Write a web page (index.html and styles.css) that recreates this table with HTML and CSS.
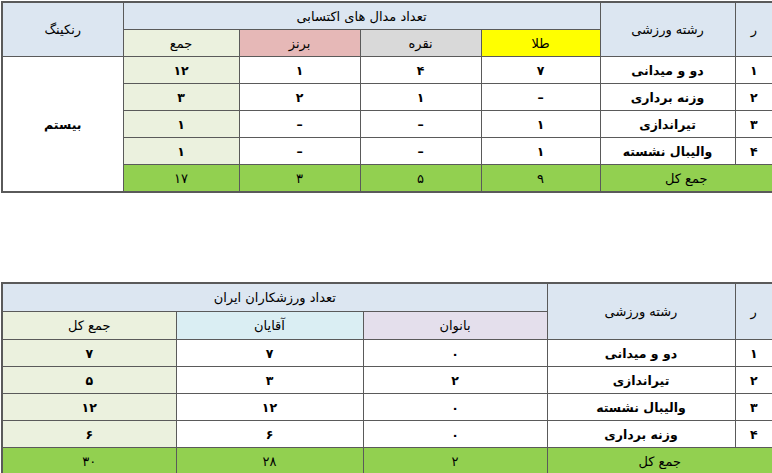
FILE: index.html
```html
<!DOCTYPE html>
<html lang="fa">
<head>
<meta charset="utf-8">
<link rel="stylesheet" href="styles.css">
</head>
<body>
<div class="page">
  <table class="grid medals" dir="rtl">
    <colgroup>
      <col class="w-r"><col class="w-sport1"><col class="w-gold"><col class="w-silver"><col class="w-bronze"><col class="w-sum"><col class="w-rank">
    </colgroup>
    <tr class="hrow">
      <th rowspan="2" class="hd">ر</th>
      <th rowspan="2" class="hd">رشته ورزشی</th>
      <th colspan="4" class="hd">تعداد مدال های اکتسابی</th>
      <th rowspan="2" class="hd">رنکینگ</th>
    </tr>
    <tr class="hrow">
      <th class="gold">طلا</th>
      <th class="silver">نقره</th>
      <th class="bronze">برنز</th>
      <th class="sumh">جمع</th>
    </tr>
    <tr><td>۱</td><td>دو و میدانی</td><td>۷</td><td>۴</td><td>۱</td><td class="sumc">۱۲</td><td rowspan="5" class="rank">بیستم</td></tr>
    <tr><td>۲</td><td>وزنه برداری</td><td>–</td><td>۱</td><td>۲</td><td class="sumc">۳</td></tr>
    <tr><td>۳</td><td>تیراندازی</td><td>۱</td><td>–</td><td>–</td><td class="sumc">۱</td></tr>
    <tr><td>۴</td><td>والیبال نشسته</td><td>۱</td><td>–</td><td>–</td><td class="sumc">۱</td></tr>
    <tr class="total"><td colspan="2">جمع کل</td><td>۹</td><td>۵</td><td>۳</td><td>۱۷</td></tr>
  </table>

  <table class="grid athletes" dir="rtl">
    <colgroup>
      <col class="w-r"><col class="w-sport2"><col class="w-women"><col class="w-men"><col class="w-all">
    </colgroup>
    <tr class="hrow2">
      <th rowspan="2" class="hd">ر</th>
      <th rowspan="2" class="hd">رشته ورزشی</th>
      <th colspan="3" class="hd">تعداد ورزشکاران ایران</th>
    </tr>
    <tr class="hrow2">
      <th class="women">بانوان</th>
      <th class="men">آقایان</th>
      <th class="sumh">جمع کل</th>
    </tr>
    <tr><td>۱</td><td>دو و میدانی</td><td>۰</td><td>۷</td><td class="sumc">۷</td></tr>
    <tr><td>۲</td><td>تیراندازی</td><td>۲</td><td>۳</td><td class="sumc">۵</td></tr>
    <tr><td>۳</td><td>والیبال نشسته</td><td>۰</td><td>۱۲</td><td class="sumc">۱۲</td></tr>
    <tr><td>۴</td><td>وزنه برداری</td><td>۰</td><td>۶</td><td class="sumc">۶</td></tr>
    <tr class="total"><td colspan="2">جمع کل</td><td>۲</td><td>۲۸</td><td>۳۰</td></tr>
  </table>
</div>
</body>
</html>
```

FILE: styles.css
```css
html, body {
  margin: 0;
  padding: 0;
  background: #ffffff;
}
body {
  font-family: "DejaVu Sans", "Noto Sans", sans-serif;
  font-size: 12.5px;
  color: #000;
}
.page {
  display: flex;
  flex-direction: column;
  align-items: flex-start;
  gap: 89px;
  padding: 1px 0 0 1px;
}
.grid {
  border-collapse: collapse;
  table-layout: fixed;
  width: 771px;
  border: 2px solid #5a5a5a;
}
.grid th, .grid td {
  border: 1px solid #5a5a5a;
  text-align: center;
  vertical-align: middle;
  padding: 0;
  overflow: hidden;
  white-space: nowrap;
}
.grid th {
  font-weight: normal;
  font-size: 13px;
}
.grid td {
  font-weight: bold;
  height: 26px;
}
.hrow th { height: 26px; }
.hrow2 th { height: 27px; }
.hd { background: #dce6f1; }
.gold { background: #ffff00; }
.silver { background: #d9d9d9; }
.bronze { background: #e6b8b7; }
.sumh { background: #ebf1de; }
.sumc { background: #ebf1de; }
.women { background: #e4dfec; }
.men { background: #daeef3; }
.rank { background: #ffffff; }
.total td { background: #92d050; font-weight: normal; font-size: 13px; }

.w-r { width: 38px; }
.w-sport1 { width: 135px; }
.w-gold { width: 119px; }
.w-silver { width: 121px; }
.w-bronze { width: 121px; }
.w-sum { width: 116px; }
.w-rank { width: 121px; }
.w-sport2 { width: 188px; }
.w-women { width: 184px; }
.w-men { width: 187px; }
.w-all { width: 174px; }
```
